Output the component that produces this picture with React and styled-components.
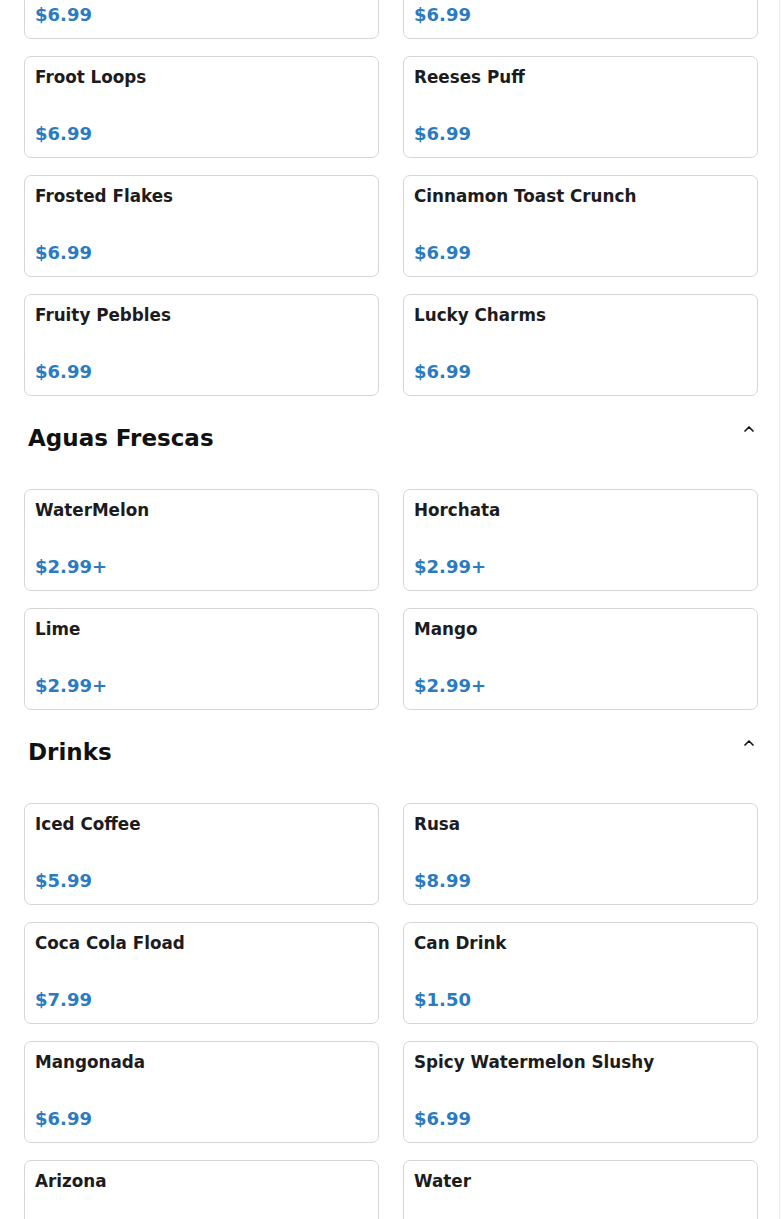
import React from "react";
import styled, { createGlobalStyle } from "styled-components";
import { ChevronUp } from "lucide-react";

const GlobalStyle = createGlobalStyle`
  html, body {
    margin: 0;
    padding: 0;
    background-color: #fff;
    font-family: "DejaVu Sans", "Liberation Sans", sans-serif;
  }
  body {
    overflow: hidden;
    background-image: linear-gradient(
      to right,
      transparent 779px,
      #e9e9e9 779px,
      #e9e9e9 780px,
      transparent 780px
    );
  }
`;

const menu = [
  {
    title: "Cereal Shakes",
    items: [
      { name: "Cocoa Puffs", price: "$6.99" },
      { name: "Apple Jacks", price: "$6.99" },
      { name: "Froot Loops", price: "$6.99" },
      { name: "Reeses Puff", price: "$6.99" },
      { name: "Frosted Flakes", price: "$6.99" },
      { name: "Cinnamon Toast Crunch", price: "$6.99" },
      { name: "Fruity Pebbles", price: "$6.99" },
      { name: "Lucky Charms", price: "$6.99" },
    ],
  },
  {
    title: "Aguas Frescas",
    items: [
      { name: "WaterMelon", price: "$2.99+" },
      { name: "Horchata", price: "$2.99+" },
      { name: "Lime", price: "$2.99+" },
      { name: "Mango", price: "$2.99+" },
    ],
  },
  {
    title: "Drinks",
    items: [
      { name: "Iced Coffee", price: "$5.99" },
      { name: "Rusa", price: "$8.99" },
      { name: "Coca Cola Fload", price: "$7.99" },
      { name: "Can Drink", price: "$1.50" },
      { name: "Mangonada", price: "$6.99" },
      { name: "Spicy Watermelon Slushy", price: "$6.99" },
      { name: "Arizona", price: "$2.50" },
      { name: "Water", price: "$1.50" },
    ],
  },
];

// the list is shown scrolled down, so the first section starts above the top
const Page = styled.div`
  display: flow-root;
  margin-top: -156px;
  padding: 0 24px 40px;
`;

const Section = styled.section`
  display: flow-root;
`;

const SectionHeader = styled.div`
  display: flex;
  justify-content: space-between;
  align-items: flex-start;
  margin: 29px 0 38px;
  padding-left: 4px;
`;

const SectionTitle = styled.h2`
  margin: 0;
  font-size: 23px;
  line-height: 26px;
  font-weight: 700;
  color: #111;
`;

const Toggle = styled.button`
  display: flex;
  padding: 0;
  margin: -4px 1px 0 0;
  border: none;
  background: none;
  color: #111;
  cursor: pointer;
`;

const Grid = styled.div`
  display: grid;
  grid-template-columns: 1fr 1fr;
  column-gap: 24px;
  row-gap: 17px;
`;

const Card = styled.div`
  display: flex;
  flex-direction: column;
  justify-content: space-between;
  box-sizing: border-box;
  height: 102px;
  padding: 10px 10px 13px;
  border: 1px solid #d6d6d6;
  border-radius: 7px;
  background-color: #fff;
`;

const ItemName = styled.span`
  font-size: 16.8px;
  font-weight: 700;
  color: #1c1c1e;
`;

const Price = styled.span`
  font-size: 18px;
  font-weight: 700;
  color: #2b7bc0;
`;

export default function App() {
  return (
    <>
      <GlobalStyle />
      <Page>
        {menu.map((section) => (
          <Section key={section.title}>
            <SectionHeader>
              <SectionTitle>{section.title}</SectionTitle>
              <Toggle aria-label="Collapse">
                <ChevronUp size={16} strokeWidth={2.5} />
              </Toggle>
            </SectionHeader>
            <Grid>
              {section.items.map((item) => (
                <Card key={item.name}>
                  <ItemName>{item.name}</ItemName>
                  <Price>{item.price}</Price>
                </Card>
              ))}
            </Grid>
          </Section>
        ))}
      </Page>
    </>
  );
}
